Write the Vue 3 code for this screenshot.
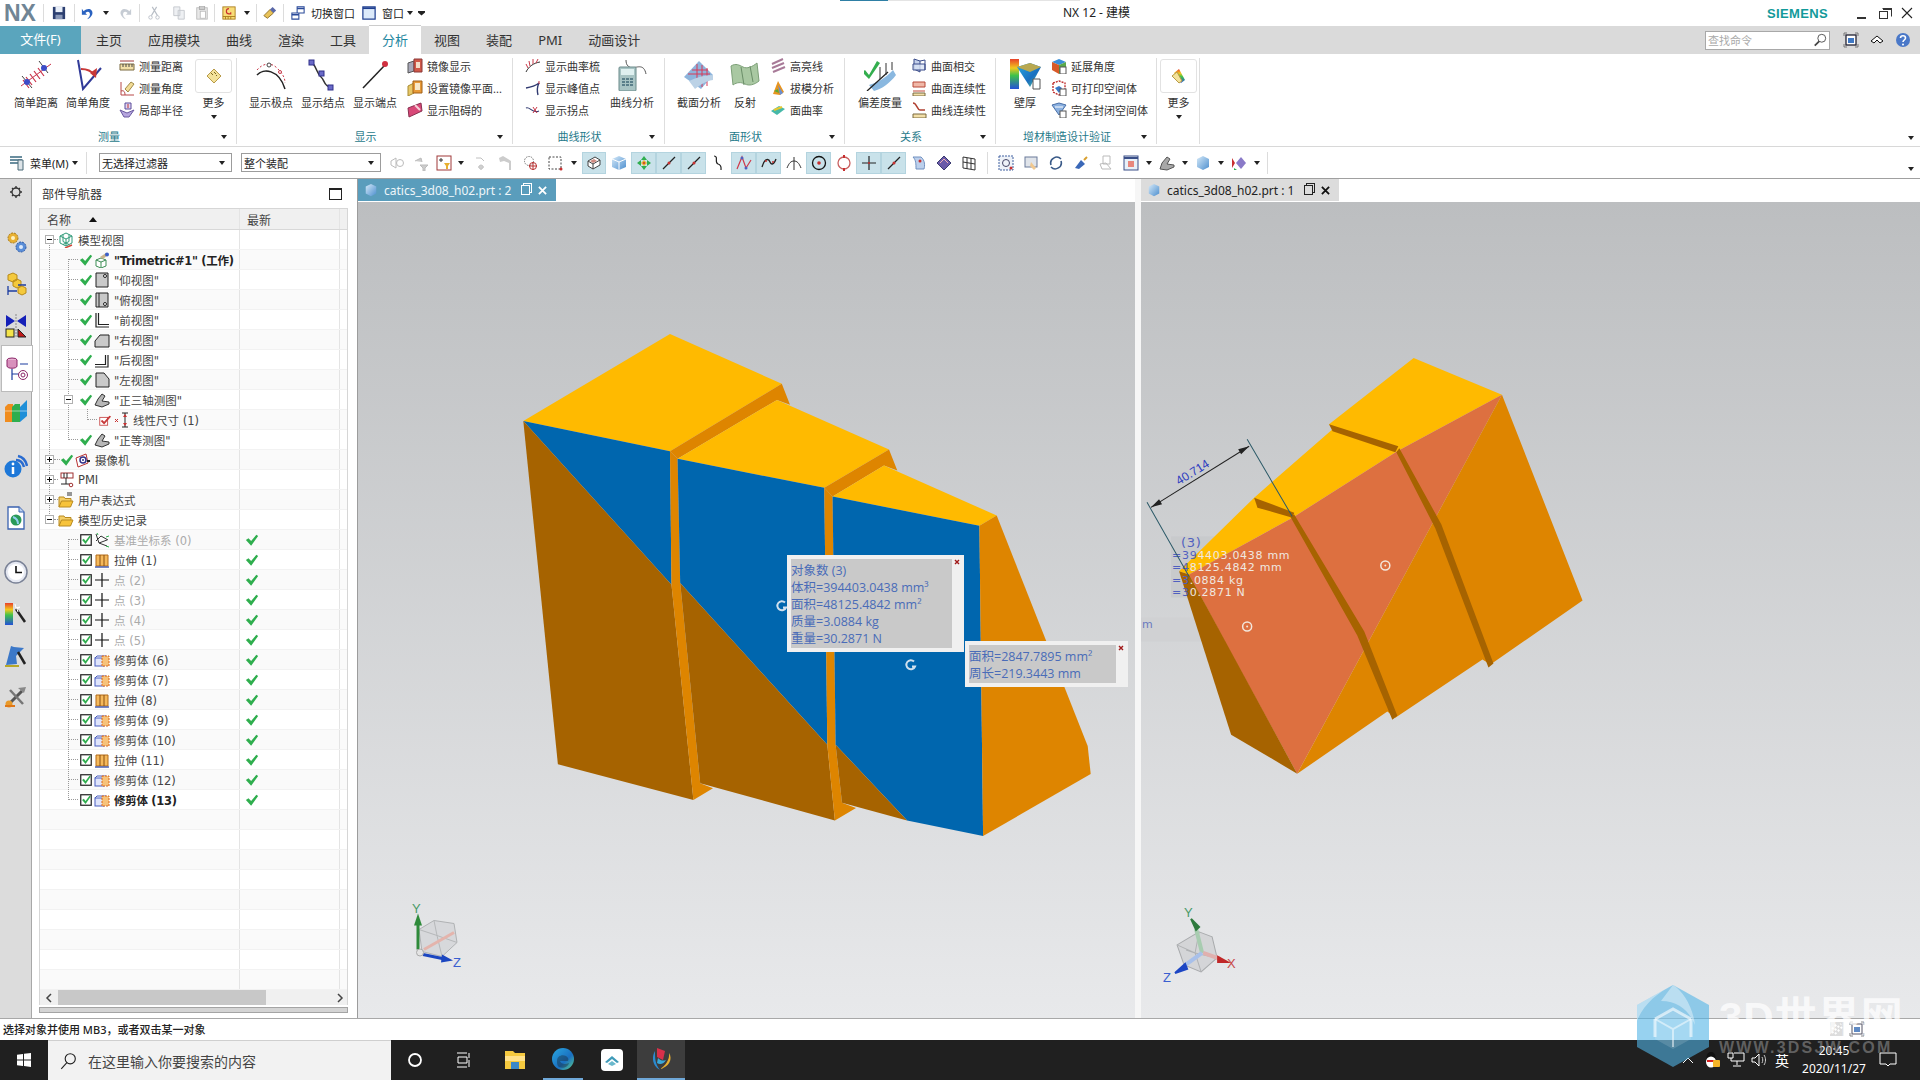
<template>
  <div class="app">
    <svg class="defs" aria-hidden="true">
      <defs>
        <linearGradient id="rainbow" x1="0" y1="0" x2="0" y2="1">
          <stop offset="0" stop-color="#e8402a" /><stop offset=".3" stop-color="#f2c81e" /><stop offset=".55" stop-color="#3ec24a" /><stop offset="1" stop-color="#2450d8" />
        </linearGradient>
        <linearGradient id="cubeblue" x1="0" y1="0" x2="1" y2="1">
          <stop offset="0" stop-color="#d5e9f8" /><stop offset="1" stop-color="#4d8fcf" />
        </linearGradient>
        <linearGradient id="gold" x1="0" y1="0" x2="0" y2="1">
          <stop offset="0" stop-color="#ffe07a" /><stop offset="1" stop-color="#e89a18" />
        </linearGradient>
        <linearGradient id="edge" x1="0" y1="0" x2="1" y2="1">
          <stop offset="0" stop-color="#2aa8e0" /><stop offset=".6" stop-color="#1a6fc0" /><stop offset="1" stop-color="#5ed08a" />
        </linearGradient>

        <symbol id="check" viewBox="0 0 16 16"><path d="M1 8l3-2 3 3 6-7 2 1.500-8 11z" fill="#2fae4e" /></symbol>
        <symbol id="checkred" viewBox="0 0 16 16"><rect x="2" y="5" width="9" height="9" fill="#fff" stroke="#c84a4a" /><path d="M3 9l2-1 2 2 6-7 2 1-8 9z" fill="#c83838" /></symbol>
        <symbol id="tbox" viewBox="0 0 16 16"><rect x="2" y="2" width="12" height="12" fill="#fff" stroke="#222" stroke-width="1.400" /><path d="M3.500 8l2-1.500 2 2.500 4.500-6 1.500 1-6 8.500z" fill="#2fae4e" /></symbol>

        <symbol id="modelview" viewBox="0 0 16 16"><path d="M8 1l6 3v7l-6 3-6-3V4zM2 4l6 3 6-3M8 7v7M5 2.500v7l6 3M11 2.500v7l-6 3" fill="none" stroke="#2f9a78" /><path d="M7 16l7-3" stroke="#d04a3a" stroke-width="1.500" /></symbol>
        <symbol id="trimetric" viewBox="0 0 16 16"><path d="M2 8l5-2 5 2v6l-5 2-5-2zM2 8l5 2 5-2M7 10v6" fill="#fff" stroke="#3f8f56" /><path d="M6 5l6-4 2 2-5 4z" fill="#c8b38a" /><circle cx="13" cy="2.500" r="2" fill="#3c5fc8" /></symbol>
        <symbol id="vbot" viewBox="0 0 16 16"><path d="M2 1h12v14H2z" fill="#c9c9c9" stroke="#222" /><circle cx="11" cy="4" r="1.500" fill="#fff" stroke="#222" /></symbol>
        <symbol id="vtop" viewBox="0 0 16 16"><path d="M2 1h12v14H2z" fill="#c9c9c9" stroke="#222" /><path d="M5 1v14" stroke="#222" /><circle cx="11" cy="12" r="1.500" fill="#fff" stroke="#222" /></symbol>
        <symbol id="vfront" viewBox="0 0 16 16"><path d="M2 1v14h13M4.500 1v11.500H15" fill="none" stroke="#222" stroke-width="1.200" /></symbol>
        <symbol id="vright" viewBox="0 0 16 16"><path d="M1 15V9l5-6h9v12z" fill="#c9c9c9" stroke="#222" /></symbol>
        <symbol id="vback" viewBox="0 0 16 16"><path d="M1 15h13V3M1 12.500h10.500V3" fill="none" stroke="#222" stroke-width="1.200" /></symbol>
        <symbol id="vleft" viewBox="0 0 16 16"><path d="M2 1h8l5 6v8H2z" fill="#c9c9c9" stroke="#222" /></symbol>
        <symbol id="iso" viewBox="0 0 16 16"><path d="M1 13l3-6 4-5 3 2-3 5 7 1v2l-7 3z" fill="#b6b6b6" stroke="#333" /></symbol>
        <symbol id="dim" viewBox="0 0 16 16"><path d="M9 1h6M12 1v14M9 15h6" stroke="#222" fill="none" /><path d="M12 2l-2 3h4zM12 14l-2-3h4z" fill="#c83030" /><path d="M2 7l3 3m0-3l-3 3" stroke="#c83030" /></symbol>
        <symbol id="camera" viewBox="0 0 16 16"><path d="M1 6l10-4 2 9-10 4z" fill="#fff" stroke="#b83030" /><circle cx="8" cy="8" r="3" fill="none" stroke="#32328a" stroke-width="1.500" /><circle cx="8" cy="8" r="1" fill="#32328a" /><path d="M12 9h3" stroke="#222" stroke-width="2" /></symbol>
        <symbol id="pmi" viewBox="0 0 16 16"><rect x="3" y="1" width="12" height="5" fill="#fff" stroke="#a03030" /><path d="M6 1v5M9 1v5M8 6v6H3M8 12h4" fill="none" stroke="#222" /><circle cx="13" cy="13" r="1.800" fill="#fff" stroke="#a03030" /></symbol>
        <symbol id="folder" viewBox="0 0 16 16"><path d="M1 14V4h5l1 1.500h6V8" fill="#f6d068" stroke="#b88a20" /><path d="M1 14l2.500-6H15l-2.500 6z" fill="#f7c33a" stroke="#b88a20" /></symbol>
        <symbol id="folderf" viewBox="0 0 16 16"><path d="M1 15V5h5l1 1.500h6V9" fill="#f6d068" stroke="#b88a20" /><path d="M1 15l2.500-6H15l-2.500 6z" fill="#f7c33a" stroke="#b88a20" /><path d="M9 1h5M9 3h5" stroke="#333" /></symbol>
        <symbol id="csys" viewBox="0 0 16 16"><path d="M2 2l3 9 8-3M5 11l8 3M2 9l5-5 7 4" fill="none" stroke="#333" /><path d="M12 5l3-1M3 1l1 2M12 14l3 1" stroke="#2fae4e" /></symbol>
        <symbol id="extrude" viewBox="0 0 16 16"><path d="M2 3h12v11H2z" fill="#f5b95c" stroke="#b26a18" /><path d="M6 3v11M10 3v11" stroke="#8a4e10" /><path d="M1 15h14" stroke="#4a5fb0" stroke-width="1.500" /></symbol>
        <symbol id="point" viewBox="0 0 16 16"><path d="M8 1v14M1 8h14" stroke="#111" stroke-width="1.200" /></symbol>
        <symbol id="trimb" viewBox="0 0 16 16"><rect x="1" y="6" width="9" height="8" fill="#dfe4fb" stroke="#4a5fc0" /><path d="M1 6l2-2h9l-2 2M10 6v8" fill="none" stroke="#4a5fc0" /><rect x="8" y="4" width="7" height="10" fill="#f7c27a" stroke="#d8681c" stroke-dasharray="2 1" /></symbol>

        <symbol id="r-gear" viewBox="0 0 24 24"><circle cx="12" cy="12" r="6" fill="none" stroke="#333" stroke-width="2" /><path d="M12 3v3M12 18v3M3 12h3M18 12h3M6 6l2 2M16 16l2 2M6 18l2-2M16 8l2-2" stroke="#333" stroke-width="2" /></symbol>
        <symbol id="r-gears" viewBox="0 0 24 24"><circle cx="9" cy="8" r="5" fill="#e8b032" stroke="#a87a18" stroke-dasharray="2 1" /><circle cx="9" cy="8" r="2" fill="#fff2c0" /><circle cx="17" cy="17" r="5" fill="#5a8ed8" stroke="#2c5aa8" stroke-dasharray="2 1" /><circle cx="17" cy="17" r="2" fill="#dbe9fb" /></symbol>
        <symbol id="r-parts" viewBox="0 0 24 24"><path d="M4 3l5-2 4 2v5l-4 2-5-2zM9 9l4-2 4 2v5l-4 2-4-2z" fill="#f4c93c" stroke="#b88a18" /><path d="M4 14v9M4 19h9M14 13h8" stroke="#1c3ca0" stroke-width="1.300" fill="none" /><path d="M14 16l4-2 4 2v5l-4 2-4-2z" fill="#f4c93c" stroke="#b88a18" /></symbol>
        <symbol id="r-con" viewBox="0 0 24 24"><path d="M2 1l9 6-9 6zM22 1l-9 6 9 6z" fill="#1520b8" /><path d="M12 0v24" stroke="#888" stroke-dasharray="2 1" /><rect x="2" y="15" width="8" height="8" fill="#f4e44a" stroke="#222" /><path d="M14 23v-8l8 8z" fill="#c01818" stroke="#222" /></symbol>
        <symbol id="r-nav" viewBox="0 0 24 24"><ellipse cx="7" cy="3" rx="5" ry="2" fill="#e7b4d2" stroke="#8a2468" /><path d="M2 3v6c0 3 10 3 10 0V3" fill="#d890bc" stroke="#8a2468" /><path d="M15 7h8M7 12v11M7 17h8" stroke="#1c3ca0" stroke-width="1.200" fill="none" /><circle cx="18" cy="18" r="4.500" fill="#fff" stroke="#8a2468" /><circle cx="18" cy="18" r="2" fill="none" stroke="#8a2468" /></symbol>
        <symbol id="r-books" viewBox="0 0 24 24"><path d="M1 8l3-3h5v18H1z" fill="#f08c1e" /><path d="M8 8l3-3h5v18H8z" fill="#2fae4e" /><path d="M16 8l7-7v16l-7 6z" fill="#1f8fd8" /><path d="M1 12h22" stroke="#fff" stroke-opacity=".5" /></symbol>
        <symbol id="r-info" viewBox="0 0 24 24"><path d="M14 2c5 1 8 5 9 10M12 6c4 0 7 3 8 7" fill="none" stroke="#2a6cd0" stroke-width="2.500" /><circle cx="9" cy="15" r="8.500" fill="#1e78d8" /><path d="M9 13v7" stroke="#fff" stroke-width="2.500" /><circle cx="9" cy="10" r="1.400" fill="#fff" /></symbol>
        <symbol id="r-doc" viewBox="0 0 24 24"><path d="M4 1h11l5 5v17H4z" fill="#fff" stroke="#3a62b0" stroke-width="1.300" /><path d="M15 1v5h5" fill="#bcd2f2" stroke="#3a62b0" /><circle cx="12" cy="14" r="5.500" fill="#2a9a58" /><path d="M9 11c3 1 5 3 5 7" stroke="#8fd0ee" stroke-width="2" fill="none" /></symbol>
        <symbol id="r-clock" viewBox="0 0 24 24"><circle cx="12" cy="12" r="11" fill="#e6e9f2" stroke="#7a8296" stroke-width="1.500" /><circle cx="12" cy="12" r="8" fill="#fff" /><path d="M12 6v6.500h6" stroke="#111" stroke-width="1.600" fill="none" /></symbol>
        <symbol id="r-map" viewBox="0 0 24 24"><rect x="1" y="1" width="8" height="22" fill="url(#rainbow)" /><path d="M12 7l9 13" stroke="#222" stroke-width="2.500" /><path d="M11 2l1 4 4-1-3 2 1 3" fill="#fff" stroke="#fff" /></symbol>
        <symbol id="r-wiz" viewBox="0 0 24 24"><path d="M2 21l5-19 3 1 10 1-8 8 1 8z" fill="#3c78c8" /><path d="M14 8l7 12" stroke="#222" stroke-width="2.500" /><path d="M1 22h14" stroke="#b8a828" stroke-width="2" /></symbol>
        <symbol id="r-tool" viewBox="0 0 24 24"><path d="M4 20L18 6" stroke="#555" stroke-width="3" /><path d="M14 3l8-1-2 6z" fill="#888" /><path d="M6 5l13 14" stroke="#777" stroke-width="2.500" /><circle cx="5" cy="19" r="3.500" fill="#e89a2a" /><path d="M1 21h10" stroke="#e07818" stroke-width="2" /></symbol>

        <symbol id="b-dist" viewBox="0 0 32 32"><path d="M1 27l30-22" stroke="#c83048" /><path d="M6 18l6 8M10 15l6 8M14 12l6 8M18 9l6 8M3 21l6 8" stroke="#c83048" stroke-width="1.200" /><path d="M2 17l10 12M19 2l9 12" stroke="#444" /><circle cx="7" cy="23" r="3" fill="#3c4cc8" /><circle cx="24" cy="9" r="3" fill="#3c4cc8" /></symbol>
        <symbol id="b-ang" viewBox="0 0 32 32"><path d="M6 1l5 29L29 9" fill="none" stroke="#303a98" stroke-width="2" /><path d="M9 10c5 0 10 1 13 6" fill="none" stroke="#c83838" stroke-width="2" /><path d="M25 9l-1 10-6-5z" fill="#c83838" /></symbol>
        <symbol id="b-pole" viewBox="0 0 32 32"><path d="M2 16c6-7 22-6 28 14" fill="none" stroke="#222" stroke-width="1.500" /><path d="M2 11c6-7 14-8 20-2s8 10 8 15" fill="none" stroke="#c83848" stroke-dasharray="2 2" /><circle cx="14" cy="6" r="2" fill="#fff" stroke="#444" /><circle cx="25" cy="13" r="1.500" fill="#fff" stroke="#c83848" /></symbol>
        <symbol id="b-knot" viewBox="0 0 32 32"><path d="M5 3c6 8 5 12 9 15s2 9 11 11" fill="none" stroke="#333" stroke-width="1.500" /><rect x="2" y="1" width="5" height="5" fill="#6a6ac8" stroke="#30308a" /><rect x="12" y="12" width="5" height="5" fill="#6a6ac8" stroke="#30308a" /><rect x="21" y="26" width="5" height="5" fill="#6a6ac8" stroke="#30308a" /></symbol>
        <symbol id="b-end" viewBox="0 0 32 32"><path d="M4 29L26 6" stroke="#222" stroke-width="1.500" /><circle cx="26" cy="5" r="3" fill="#d03040" /></symbol>
        <symbol id="b-ana" viewBox="0 0 32 32"><path d="M10 1c0 6 3 7 6 8M16 9c6-1 12-4 14 6" fill="none" stroke="#555" /><rect x="3" y="8" width="17" height="24" rx="1" fill="#a8c4c4" stroke="#6a8a8a" /><rect x="5" y="10" width="13" height="6" fill="#dff0f0" /><path d="M6 20h11M6 23h11M6 26h11" stroke="#5a7f8a" stroke-width="2" stroke-dasharray="3 1" /></symbol>
        <symbol id="b-sec" viewBox="0 0 32 32"><path d="M1 18L16 2l14 14-12 14z" fill="#8db4dc" /><path d="M5 15h22M9 11h16M14 5v22M19 6v22M24 9v18" stroke="#d83a58" /><path d="M6 22c8-4 16-6 24-6v5c-8 1-14 6-18 9z" fill="#bcd2e6" /></symbol>
        <symbol id="b-ref" viewBox="0 0 32 32"><path d="M2 7c5-3 8-1 12 1s9 0 14-4l2 18c-5 4-10 5-14 3s-8-2-12 1z" fill="#a9c8a2" stroke="#7da078" /><path d="M12 8l3 18M21 7l3 16" stroke="#6a8e68" /></symbol>
        <symbol id="b-dev" viewBox="0 0 32 32"><path d="M1 11l4 5L13 2l3 2-11 16-7-7z" fill="#33ae4e" /><path d="M5 26c8-2 18-8 24-15l3 5c-6 8-14 14-22 16z" fill="#8ab8e0" /><path d="M3 32L24 13" stroke="#222" stroke-width="1.300" /><path d="M16 20V8M22 16V4M28 11V3" stroke="#333" /></symbol>
        <symbol id="b-wall" viewBox="0 0 32 32"><rect x="1" y="0" width="9" height="30" fill="url(#rainbow)" /><path d="M8 8l13-4 11 4-11 20z" fill="url(#edge)" /><path d="M8 8l13-4 11 4-11 5z" fill="#b8a850" /><path d="M24 20h7v10h-7z" fill="#fff" stroke="#555" /></symbol>
        <symbol id="ruler" viewBox="0 0 16 16"><path d="M1 8l7-7 7 7-7 7z" fill="#f3e29a" stroke="#b89a48" /><path d="M5 5l2 2M8 4l2 2M11 7l-1 1" stroke="#7a6520" /></symbol>
        <symbol id="rulerc" viewBox="0 0 16 16"><path d="M3 5l5-4 6 11-4 3z" fill="url(#rainbow)" /><path d="M1 8l5-4 5 9-3 2z" fill="#f3e29a" stroke="#b89a48" /></symbol>

        <symbol id="s-mdist" viewBox="0 0 16 16"><path d="M1 6h14v6H1z" fill="#f2dfa8" stroke="#7a6a40" /><path d="M4 6v3M7 6v3M10 6v3M13 6v3" stroke="#444" /><path d="M1 3h14" stroke="#a03838" /></symbol>
        <symbol id="s-mang" viewBox="0 0 16 16"><path d="M2 2v13h13" fill="none" stroke="#b84848" /><path d="M2 11c3-1 4 1 4 4" fill="none" stroke="#b84848" /><path d="M6 9l6-7 3 2-6 8z" fill="#f2dc96" stroke="#a08a48" /></symbol>
        <symbol id="s-rad" viewBox="0 0 16 16"><path d="M1 8l7 3 7-3-5 7H5z" fill="#b6a6de" stroke="#6a5aa0" /><path d="M6 1h6v6H6z" fill="#e0d8f4" stroke="#5a4a9a" /><path d="M9 2v4" stroke="#c03030" /></symbol>
        <symbol id="s-mir" viewBox="0 0 16 16"><path d="M1 5l6-2v10l-6 2z" fill="#a8a8b8" stroke="#555" /><path d="M7 1h8v13H7z" fill="#d05848" stroke="#8a3838" /><rect x="9" y="4" width="4" height="6" fill="#f4dcc8" /></symbol>
        <symbol id="s-mpl" viewBox="0 0 16 16"><path d="M1 6l6-3v10l-6 3z" fill="#e8c868" stroke="#a88a30" /><path d="M6 1h9v12H6z" fill="#e89a38" stroke="#a06018" /><rect x="8" y="3" width="5" height="7" fill="#f7e8c8" /></symbol>
        <symbol id="s-blk" viewBox="0 0 16 16"><path d="M1 6l13-5 1 8-13 6z" fill="#d84878" stroke="#883050" /><path d="M8 3l5 5" stroke="#f7d0d8" stroke-width="2" /></symbol>
        <symbol id="s-comb" viewBox="0 0 16 16"><path d="M1 14c3-6 8-9 14-10" fill="none" stroke="#333" /><path d="M3 10L1 6M5 8L4 3M8 6L8 1M11 5l2-4" stroke="#c83848" /></symbol>
        <symbol id="s-peak" viewBox="0 0 16 16"><path d="M1 8c6-1 9-2 13-5-2 4-2 8-1 12" fill="none" stroke="#303a70" stroke-width="1.400" /><path d="M14 1v3" stroke="#c83848" /></symbol>
        <symbol id="s-inf" viewBox="0 0 16 16"><path d="M1 6c4-2 6 6 13 3" fill="none" stroke="#303a70" stroke-width="1.200" /><path d="M8 5l4 6m0-6l-4 6" stroke="#c83848" /></symbol>
        <symbol id="s-hl" viewBox="0 0 16 16"><path d="M2 6l11-5M2 10l12-5M3 14l12-5" stroke="#a87a98" stroke-width="2" /></symbol>
        <symbol id="s-dft" viewBox="0 0 16 16"><path d="M3 14L8 1l6 11-4 3z" fill="#e8941e" /><path d="M8 5l5 8-3 2z" fill="#6a8ed0" /><path d="M4 11l4-2 1 4z" fill="#5aa83a" /></symbol>
        <symbol id="s-fc" viewBox="0 0 16 16"><path d="M1 9l8-5 6 3-8 6z" fill="#46b8a8" /><path d="M4 8l8-3" stroke="#e8c830" stroke-width="2" /></symbol>
        <symbol id="s-int" viewBox="0 0 16 16"><path d="M3 1l6 2v11l-6-3z" fill="#c4d0ea" stroke="#3a4c8a" /><path d="M2 6h12v6H2z" fill="#d8e2f4" fill-opacity=".8" stroke="#3a4c8a" /><path d="M9 3l5-1v10" fill="none" stroke="#3a4c8a" /></symbol>
        <symbol id="s-sc" viewBox="0 0 16 16"><path d="M2 2h12v5H2z" fill="#f0b8a8" stroke="#b84838" /><path d="M2 11h12" stroke="#c04838" /><path d="M2 13h12v3H2z" fill="#f2dfa8" stroke="#7a6a40" /></symbol>
        <symbol id="s-cc" viewBox="0 0 16 16"><path d="M2 1c4 0 4 7 7 7h5" fill="none" stroke="#b04030" stroke-width="1.500" /><path d="M2 12h13v4H2z" fill="#f2dfa8" stroke="#7a6a40" /></symbol>
        <symbol id="s-ext" viewBox="0 0 16 16"><path d="M1 4l7-3 7 3-7 3z" fill="#3a8ed8" /><path d="M1 4v8l7 4V7z" fill="#d85a28" /><path d="M15 4v8l-7 4V7z" fill="#5aa84a" /><rect x="9" y="9" width="6" height="7" fill="#fff" stroke="#555" /></symbol>
        <symbol id="s-pr" viewBox="0 0 16 16"><path d="M2 3l6-2 6 2v9l-6 3-6-3z" fill="none" stroke="#c03030" stroke-dasharray="2 1" stroke-width="1.400" /><path d="M4 8l4-2 3 2-3 5z" fill="#3a78c8" /><rect x="9" y="9" width="6" height="7" fill="#fff" stroke="#555" /></symbol>
        <symbol id="s-cl" viewBox="0 0 16 16"><path d="M1 3l7-2 7 2-7 10z" fill="#8ab0e0" stroke="#4a70a8" /><path d="M4 5h8" stroke="#fff" /><rect x="9" y="9" width="6" height="7" fill="#fff" stroke="#555" /></symbol>

        <symbol id="q-save" viewBox="0 0 16 16"><path d="M1 1h14v14H1z" fill="#2c3f70" /><rect x="4" y="1" width="8" height="6" fill="#e8eef8" /><rect x="4" y="10" width="8" height="5" fill="#8a98b8" /></symbol>
        <symbol id="q-undo" viewBox="0 0 16 16"><path d="M3 6c5-5 11-2 10 3-1 3-3 5-6 6 2-2 4-4 3-7-1-2-3-2-5 0l2 2H1V3z" fill="#2a62c0" /></symbol>
        <symbol id="q-redo" viewBox="0 0 16 16"><path d="M13 6C8 1 2 4 3 9c1 3 3 5 6 6-2-2-4-4-3-7 1-2 3-2 5 0L9 10h6V3z" fill="#c6ccd4" /></symbol>
        <symbol id="q-cut" viewBox="0 0 16 16"><path d="M11 1L5 11M6 1l6 10" stroke="#b8bec6" stroke-width="1.300" /><circle cx="4" cy="13" r="2" fill="none" stroke="#b8bec6" /><circle cx="12" cy="13" r="2" fill="none" stroke="#b8bec6" /></symbol>
        <symbol id="q-copy" viewBox="0 0 16 16"><path d="M2 1h7v10H2zM7 5h7v10H7z" fill="#eef0f3" stroke="#c2c6cc" /></symbol>
        <symbol id="q-paste" viewBox="0 0 16 16"><rect x="2" y="2" width="12" height="13" fill="#e8e8e8" stroke="#bbb" /><rect x="5" y="0" width="6" height="4" fill="#ccc" stroke="#aaa" /><rect x="6" y="6" width="6" height="8" fill="#fff" stroke="#bbb" /></symbol>
        <symbol id="q-cfg" viewBox="0 0 16 16"><rect x="1" y="1" width="14" height="14" fill="#f8dc78" stroke="#a87a18" /><path d="M1 12h14M4 12v3M7 12v3M10 12v3" stroke="#a87a18" /><path d="M8 3a3 3 0 1 0 0 6h2V7" fill="none" stroke="#c83030" stroke-width="1.300" /></symbol>
        <symbol id="q-er" viewBox="0 0 16 16"><path d="M1 11l7-7 4 4-7 6z" fill="#e8c258" stroke="#8a6a20" /><path d="M8 4l3-3 4 4-3 3z" fill="#5a68a8" /></symbol>
        <symbol id="q-sw" viewBox="0 0 16 16"><path d="M7 1h8v7H7zM1 8h8v7H1z" fill="#fff" stroke="#2a4a9a" stroke-width="1.200" /><path d="M7 3h8M1 10h8" stroke="#2a4a9a" stroke-width="1.500" /></symbol>
        <symbol id="q-win" viewBox="0 0 16 16"><rect x="1" y="1" width="14" height="14" fill="#dceafa" stroke="#1f3f90" stroke-width="1.400" /><path d="M1 2.500h14" stroke="#1f3f90" stroke-width="2" /></symbol>

        <symbol id="t-menu" viewBox="0 0 16 16"><path d="M1 2h12M1 5h12M1 8h12" stroke="#3a6a80" stroke-width="1.500" /><path d="M9 5h5v10H9z" fill="#dde4e8" stroke="#4a6a78" /></symbol>
        <symbol id="t-a" viewBox="0 0 16 16"><path d="M2 6l5-3v10l-5-3z" fill="none" stroke="#bbb" /><circle cx="11" cy="8" r="3.500" fill="none" stroke="#bbb" /></symbol>
        <symbol id="t-b" viewBox="0 0 16 16"><path d="M1 6l6-3 1 4M6 10h8l-3 3v3h-2v-3z" fill="#ccc" stroke="#bbb" /></symbol>
        <symbol id="t-c" viewBox="0 0 16 16"><rect x="1" y="1" width="14" height="14" fill="#fff" stroke="#a03838" /><path d="M5 3v4M3 5h4" stroke="#333" /><path d="M8 8h6l-2 3v3h-2v-3z" fill="#e8b030" /></symbol>
        <symbol id="t-d" viewBox="0 0 16 16"><path d="M3 3h5l3 3M8 10v5M5 12h6" stroke="#c0c0c0" fill="none" /><circle cx="8" cy="12" r="2" fill="none" stroke="#c0c0c0" /></symbol>
        <symbol id="t-e" viewBox="0 0 16 16"><path d="M2 3l4-2 5 3 3 2v9h-2V8L7 6 3 7z" fill="#ccc" /></symbol>
        <symbol id="t-f" viewBox="0 0 16 16"><circle cx="6" cy="6" r="4.500" fill="none" stroke="#777" stroke-dasharray="1.500 1" /><circle cx="10" cy="11" r="3.500" fill="none" stroke="#b83030" /><path d="M10 7v8M6 11h8" stroke="#b83030" /></symbol>
        <symbol id="t-g" viewBox="0 0 16 16"><rect x="2" y="2" width="12" height="12" fill="none" stroke="#444" stroke-dasharray="2 1.500" /><circle cx="14" cy="14" r="1.500" fill="#c83030" /></symbol>
        <symbol id="t-h" viewBox="0 0 16 16"><path d="M2 6l7-4 5 3v5l-7 4-5-3z" fill="#fff" stroke="#444" /><path d="M2 6l5 3 7-4M7 9v5" stroke="#444" fill="none" /><path d="M4 6l4-2 3 2-4 2z" fill="#d08a80" /></symbol>
        <symbol id="t-i" viewBox="0 0 16 16"><path d="M1 4l7-3 7 3v8l-7 3-7-3z" fill="url(#cubeblue)" /><path d="M1 4l7 3 7-3M8 7v8" stroke="#fff" fill="none" /></symbol>
        <symbol id="t-j" viewBox="0 0 16 16"><path d="M8 1l3 4H5zM8 15l-3-4h6zM1 8l4-3v6zM15 8l-4 3V5z" fill="#2fae4e" /><path d="M8 5l3 3-3 3-3-3z" fill="#e8b030" /><circle cx="8" cy="8" r="1" fill="#c83030" /></symbol>
        <symbol id="t-l" viewBox="0 0 16 16"><path d="M2 14L14 2" stroke="#222" stroke-width="1.200" /><circle cx="8" cy="8" r="1.500" fill="#c83030" /></symbol>
        <symbol id="t-m" viewBox="0 0 16 16"><path d="M3 1c5 0 0 7 4 8s3 4 3 6" fill="none" stroke="#222" stroke-width="1.200" /></symbol>
        <symbol id="t-n" viewBox="0 0 16 16"><path d="M1 14L6 2l4 11 5-8" fill="none" stroke="#d03848" stroke-width="1.200" /><circle cx="6" cy="3" r="1.500" fill="#5060c0" /><circle cx="10" cy="13" r="1.500" fill="#5060c0" /></symbol>
        <symbol id="t-o" viewBox="0 0 16 16"><path d="M1 12C4 2 8 4 9 7s4 3 6-3" fill="none" stroke="#222" stroke-width="1.300" /><circle cx="5" cy="6" r="1" fill="#c83030" /><circle cx="12" cy="7" r="1" fill="#c83030" /></symbol>
        <symbol id="t-p" viewBox="0 0 16 16"><path d="M8 2v13M1 13c2-5 4-7 7-7s5 2 7 7" fill="none" stroke="#333" /></symbol>
        <symbol id="t-q" viewBox="0 0 16 16"><circle cx="8" cy="8" r="6.500" fill="none" stroke="#111" stroke-width="1.300" /><circle cx="8" cy="8" r="1.800" fill="#c83030" /></symbol>
        <symbol id="t-r" viewBox="0 0 16 16"><circle cx="8" cy="8" r="6" fill="none" stroke="#c86060" stroke-width="1.300" /><rect x="7" y="0" width="2" height="3" fill="#c83030" /><rect x="7" y="13" width="2" height="3" fill="#c83030" /></symbol>
        <symbol id="t-s" viewBox="0 0 16 16"><path d="M8 1v14M1 8h14" stroke="#222" stroke-width="1.200" /><circle cx="8" cy="8" r="1" fill="#c83030" /></symbol>
        <symbol id="t-u" viewBox="0 0 16 16"><path d="M2 2h8c4 3 4 9 3 12H5C5 9 5 5 2 2z" fill="#bcd0ec" stroke="#7090c0" /><circle cx="9" cy="6" r="1.500" fill="#c83030" /></symbol>
        <symbol id="t-v" viewBox="0 0 16 16"><path d="M8 1l7 7-7 7-7-7z" fill="#6a5aa8" stroke="#3a3a70" /><path d="M4 8l4-4 4 4" fill="none" stroke="#f0b0b8" /></symbol>
        <symbol id="t-w" viewBox="0 0 16 16"><path d="M2 2l12 2v11L2 13zM6 3v11M10 3v11M2 7l12 2" fill="#fff" stroke="#333" /></symbol>
        <symbol id="t-x" viewBox="0 0 16 16"><rect x="1" y="1" width="14" height="14" fill="#eef2f8" stroke="#4060a0" stroke-dasharray="2 1" /><circle cx="8" cy="8" r="3.500" fill="none" stroke="#446" /><circle cx="13" cy="13" r="1.500" fill="#c83030" /></symbol>
        <symbol id="t-y" viewBox="0 0 16 16"><rect x="2" y="2" width="12" height="10" fill="#e0e4ea" stroke="#6a7a9a" /><path d="M8 7l5 6-2 2-4-4z" fill="#f0c890" /></symbol>
        <symbol id="t-z" viewBox="0 0 16 16"><path d="M13 4A6 6 0 0 0 3 10M3 12a6 6 0 0 0 10-6" fill="none" stroke="#3a5a88" stroke-width="1.600" /></symbol>
        <symbol id="t-aa" viewBox="0 0 16 16"><path d="M2 13l6-8 4 4-6 5z" fill="#3a68b8" /><path d="M11 5l3-3" stroke="#d8a030" stroke-width="2" /></symbol>
        <symbol id="t-ab" viewBox="0 0 16 16"><path d="M5 1h7v8H5zM2 9l6-1 5 6H4z" fill="#fff" stroke="#bbb" /></symbol>
        <symbol id="t-ac" viewBox="0 0 16 16"><rect x="1" y="1" width="14" height="14" fill="#e8f0f8" stroke="#3a4f88" /><path d="M1 3h14" stroke="#3a4f88" stroke-width="2" /><rect x="5" y="6" width="6" height="6" fill="#e85a48" fill-opacity=".7" /></symbol>
        <symbol id="t-ad" viewBox="0 0 16 16"><path d="M1 14l2-6 5-6 3 2-3 5 7 1v2l-7 3z" fill="#a8a8a8" stroke="#555" /></symbol>
        <symbol id="t-ae" viewBox="0 0 16 16"><path d="M2 4l6-3 6 3v8l-6 3-6-3z" fill="url(#cubeblue)" /></symbol>
        <symbol id="t-af" viewBox="0 0 16 16"><path d="M5 8l5-6 5 6-5 6z" fill="#8a7ac8" /><path d="M1 3l3 5-3 5z" fill="#c83030" /><path d="M3 13l3 2-3 0z" fill="#2fae4e" /></symbol>
      </defs>
    </svg>

    <header class="titlebar">
      <span class="nx">NX</span>
      <span class="qsep"></span>
      <div class="qa" style="width: 30px"><svg class="i14"><use href="#q-save" /></svg></div>
      <span class="qsep"></span>
      <div class="qa" style="width: 26px"><svg class="i14"><use href="#q-undo" /></svg></div>
      <i class="caret dark" style="margin: 0 2px"></i>
      <div class="qa" style="width: 28px"><svg class="i14"><use href="#q-redo" /></svg></div>
      <span class="qsep"></span>
      <div class="qa" style="width: 27px"><svg class="i14"><use href="#q-cut" /></svg></div>
      <div class="qa" style="width: 23px"><svg class="i14"><use href="#q-copy" /></svg></div>
      <div class="qa" style="width: 24px"><svg class="i14"><use href="#q-paste" /></svg></div>
      <span class="qsep"></span>
      <div class="qa" style="width: 28px"><svg class="i14"><use href="#q-cfg" /></svg></div>
      <i class="caret dark" style="margin-left: 1px"></i>
      <span class="qsep" style="margin-left: 6px"></span>
      <div class="qa" style="width: 26px"><svg class="i14"><use href="#q-er" /></svg></div>
      <span class="qsep"></span>
      <div class="qa" style="width: 27px"><svg class="i14"><use href="#q-sw" /></svg></div>
      <span class="qtext">切换窗口</span>
      <div class="qa" style="width: 26px; margin-left: 1px"><svg class="i14"><use href="#q-win" /></svg></div>
      <span class="qtext">窗口</span>
      <i class="caret dark" style="margin-left: 3px"></i>
      <span class="custom"></span>
      <div class="progress"><span></span></div>
      <span class="doc-title">NX 12 - 建模</span>
      <span class="siemens">SIEMENS</span>
      <div class="winbtns">
        <span class="w-min"></span>
        <span class="w-res"></span>
        <svg class="w-close" viewBox="0 0 12 12"><path d="M1 1l10 10M11 1L1 11" stroke="#222" stroke-width="1.100" /></svg>
      </div>
    </header>

    <nav class="tabs">
      <div class="file-tab">文件(F)</div>
      <div v-for="t in tabs" :key="t" class="tab" :class="{ on: t === '分析' }">{{ t }}</div>
      <div class="tabs-right">
        <div class="search">
          <span>查找命令</span>
          <svg class="i14" viewBox="0 0 16 16"><circle cx="10" cy="6" r="4.500" fill="#fff" stroke="#444" /><path d="M7 9.500l-5 5" stroke="#444" stroke-width="2" /></svg>
        </div>
        <svg class="i16" viewBox="0 0 16 16"><path d="M1 4V1h3M12 1h3v3M15 12v3h-3M4 15H1v-3" fill="none" stroke="#777" /><rect x="3" y="3" width="10" height="10" fill="#fff" stroke="#223" stroke-width="1.300" /><rect x="5" y="6" width="6" height="5" fill="#3f78c4" /></svg>
        <svg class="i16" viewBox="0 0 16 16"><path d="M2 9l6-5 6 5-3 2-3-3-3 3z" fill="#fff" stroke="#111" /></svg>
        <svg class="i16" viewBox="0 0 16 16"><circle cx="8" cy="8" r="7" fill="#4a78c8" /><path d="M5.500 6c0-3 5-3 5 0 0 2-2.500 2-2.500 4" fill="none" stroke="#fff" stroke-width="1.600" /><circle cx="8" cy="12.500" r="1" fill="#fff" /></svg>
      </div>
    </nav>

    <section class="ribbon">
      <div v-for="g in groups" :key="g.id" class="group" :style="{ width: g.w + 'px' }">
        <div class="rib-top" :style="{ paddingLeft: g.pad + 'px' }">
          <template v-for="it in g.items" :key="it.key">
            <div v-if="it.kind === 'lg'" class="big" :style="{ width: it.w + 'px' }">
              <svg class="i32"><use :href="'#' + it.icon" /></svg>
              <span>{{ it.text }}</span>
            </div>
            <div v-else-if="it.kind === 'col'" class="smallcol" :style="{ width: it.w + 'px', paddingLeft: it.pl + 'px' }">
              <div v-for="r in it.rows" :key="r[1]" class="smallrow">
                <svg class="i16"><use :href="'#' + r[0]" /></svg>
                <span>{{ r[1] }}</span>
              </div>
            </div>
            <div v-else class="more">
              <div class="more-box"><svg class="i16"><use :href="'#' + it.icon" /></svg></div>
              <span>更多</span>
              <i class="caret dark"></i>
            </div>
          </template>
        </div>
        <div v-if="g.name" class="rib-label">
          <span>{{ g.name }}</span>
          <i class="caret dark"></i>
        </div>
      </div>
      <i class="caret dark rib-end"></i>
    </section>

    <section class="toolbar">
      <div class="menu-btn">
        <svg class="i16"><use href="#t-menu" /></svg>
        <span>菜单(M)</span>
        <i class="caret dark"></i>
      </div>
      <span class="tb-sep"></span>
      <div class="select" style="width: 133px"><span>无选择过滤器</span><i class="caret dark"></i></div>
      <div class="select" style="width: 140px"><span>整个装配</span><i class="caret dark"></i></div>
      <div class="tb-icons">
        <template v-for="(t, idx) in tools" :key="idx">
          <span v-if="t.sep" class="tb-sep2" :style="{ width: t.w + 'px' }"></span>
          <div v-else-if="t.caret" class="tb-caret" :style="{ width: t.w + 'px' }"><i class="caret dark"></i></div>
          <div v-else class="tb-item" :class="{ act: t.on }" :style="{ width: t.w + 'px' }">
            <svg class="i16"><use :href="'#t-' + t.n" /></svg>
          </div>
        </template>
      </div>
      <i class="caret dark rib-end2"></i>
    </section>

    <main class="main">
      <aside class="rail">
        <div v-for="r in rail" :key="r.n" class="rail-item" :class="{ on: r.on }" :style="{ height: r.h + 'px', marginTop: (r.mt || 0) + 'px' }">
          <svg :class="r.small ? 'i16' : 'i24'"><use :href="'#' + r.n" /></svg>
        </div>
      </aside>

      <section class="nav">
        <div class="nav-head">
          <span>部件导航器</span>
          <i class="maxbox"></i>
        </div>
        <div class="tree">
          <div class="tree-head">
            <div class="c-name"><span>名称</span><i class="sort"></i></div>
            <div class="c-new">最新</div>
          </div>
          <div v-for="(r, i) in rows" :key="i" class="row" :class="{ alt: i % 2 === 1 }">
            <div class="c-name" :style="{ paddingLeft: r.x + 'px' }">
              <i v-for="g in r.guides" :key="g.x" class="vl" :class="{ half: g.half, topoff: g.top }" :style="{ left: g.x + 'px' }"></i>
              <i v-if="r.stub" class="hl" :style="{ left: r.stub[0] + 'px', width: r.stub[1] + 'px' }"></i>
              <i v-if="r.exp" class="expander" :class="{ plus: r.exp === '+' }" :style="{ left: r.expX + 'px' }"></i>
              <svg v-if="r.tick" class="tk"><use href="#check" /></svg>
              <svg v-if="r.redtick" class="tk"><use href="#checkred" /></svg>
              <svg v-if="r.box" class="tk"><use href="#tbox" /></svg>
              <svg v-if="r.icon" class="ti"><use :href="'#' + r.icon" /></svg>
              <span class="rt" :class="{ grey: r.grey, bold: r.bold }">{{ r.t }}</span>
            </div>
            <div class="c-new"><svg v-if="r.box" class="tk"><use href="#check" /></svg></div>
          </div>
          <div class="hscroll">
            <svg viewBox="0 0 8 10" class="arr"><path d="M6 1L2 5l4 4" fill="none" stroke="#444" stroke-width="1.500" /></svg>
            <div class="thumb"></div>
            <svg viewBox="0 0 8 10" class="arr r"><path d="M2 1l4 4-4 4" fill="none" stroke="#444" stroke-width="1.500" /></svg>
          </div>
        </div>
        <div class="nav-bar"></div>
      </section>

      <section class="pane first">
        <div class="doc-tabs">
          <div class="doc-tab active">
            <svg class="i14"><use href="#t-ae" /></svg>
            <span>catics_3d08_h02.prt : 2</span>
            <i class="restore light"></i>
            <svg class="xx" viewBox="0 0 10 10"><path d="M1 1l8 8M9 1L1 9" stroke="#fff" stroke-width="2" /></svg>
          </div>
        </div>
        <div class="viewport">
          <svg class="scene" viewBox="359 203 777 815">
            <polygon fill="#ffba00" points="524.3,421.4 671,334.5 782.8,384.2 671,451.8" />
            <polygon fill="#de8500" points="671,451.8 782.8,384.2 791,405.2 778,400.4 678.6,459.3" />
            <polygon fill="#ffba00" points="678.6,459.3 778,400.4 890,450.1 825.3,488.3" />
            <polygon fill="#de8500" points="825.3,488.3 890,450.1 898.3,471.1 885,466 833.6,497.1" />
            <polygon fill="#ffba00" points="833.6,497.1 885,466 997.7,516 980.4,526.2" />
            <polygon fill="#0066ae" points="524.3,421.4 671,451.8 672.5,585.3" />
            <polygon fill="#a66300" points="524.3,421.4 672.5,585.3 694.4,800.6 558.9,764.8" />
            <polygon fill="#de8500" points="671,451.8 678.6,459.3 681.2,583.6 701.2,783.7 714,788.8 694.4,800.6 672.5,585.3" />
            <polygon fill="#0066ae" points="678.6,459.3 825.3,488.3 828.3,745.2 681.2,583.6" />
            <polygon fill="#a66300" points="681.2,583.6 828.3,745.2 835.9,820.9 701.2,783.7" />
            <polygon fill="#de8500" points="825.3,488.3 833.6,497.1 836.6,745.2 843,803.3 857,808.4 835.9,820.9 828.3,745.2" />
            <polygon fill="#0066ae" points="833.6,497.1 980.4,526.2 984.1,836.5 908.1,820.9 836.6,745.2" />
            <polygon fill="#a66300" points="836.6,745.2 908.1,820.9 843,803.3" />
            <polygon fill="#de8500" points="980.4,526.2 997.7,516 1088.7,746.6 1091.7,774.6 984.1,836.5" />

            <g fill="none" stroke="#cfe0ee" stroke-width="2">
              <path d="M786 603a4.500 4.500 0 1 0 1 5h-3" />
              <path d="M915 662a4.500 4.500 0 1 0 1 5h-3" />
            </g>

            <g class="triad">
              <path d="M435 921l20 3 3 19-15 14-20-5-3-22z" fill="#d2d3d5" fill-opacity=".7" stroke="#b0b2b4" />
              <path d="M420 930l18 6 20 7M438 936l-3-15M438 936l5 21" fill="none" stroke="#b6b8ba" />
              <path d="M425 950l30-17" stroke="#e4b4ac" stroke-width="3" />
              <path d="M419 950V922" stroke="#2e8a3a" stroke-width="3" />
              <path d="M419 914l-4 12h8z" fill="#2e8a3a" />
              <path d="M424 955l24 5" stroke="#1b46c0" stroke-width="3" />
              <path d="M454 961l-11-6-1 8z" fill="#1b46c0" />
              <circle cx="421" cy="953" r="3.500" fill="#e4e4e4" stroke="#aaa" />
              <text x="413" y="913" class="ax" fill="#4a9a6a">Y</text>
              <text x="454" y="967" class="ax" fill="#3a5fd0">Z</text>
            </g>
          </svg>

          <div class="popup p1">
            <div class="pop-body">
              <div>对象数 (3)</div>
              <div>体积=394403.0438 mm³</div>
              <div>面积=48125.4842 mm²</div>
              <div>质量=3.0884 kg</div>
              <div>重量=30.2871 N</div>
            </div>
            <svg class="pop-x" viewBox="0 0 6 6"><path d="M1 1l4 4M5 1L1 5" stroke="#a01818" stroke-width="1.400" /></svg>
          </div>
          <div class="popup p2">
            <div class="pop-body">
              <div>面积=2847.7895 mm²</div>
              <div>周长=219.3443 mm</div>
            </div>
            <svg class="pop-x" viewBox="0 0 6 6"><path d="M1 1l4 4M5 1L1 5" stroke="#a01818" stroke-width="1.400" /></svg>
          </div>
        </div>
      </section>

      <div class="split"></div>

      <section class="pane second">
        <div class="doc-tabs">
          <div class="doc-tab">
            <svg class="i14"><use href="#t-ae" /></svg>
            <span>catics_3d08_h02.prt : 1</span>
            <i class="restore"></i>
            <svg class="xx" viewBox="0 0 10 10"><path d="M1 1l8 8M9 1L1 9" stroke="#111" stroke-width="2" /></svg>
          </div>
        </div>
        <div class="viewport">
          <svg class="scene" viewBox="1142 203 778 815">
            <rect x="1142" y="618" width="60" height="24" fill="#d0d1d3" />
            <text x="1143" y="628" class="ghost" fill="#6a7ac0">m</text>
            <rect x="1172" y="537" width="70" height="61" fill="#c8cacc" />

            <polygon fill="#ffba00" points="1180,571.7 1255,498.3 1333.3,430 1329.8,424.9 1414.3,358.8 1502.5,395.5 1398.3,451.7 1293.3,518.3 1190,575" />
            <polygon fill="#a66300" points="1255,498.3 1258.3,508.3 1293.3,518.3 1295,513.3" />
            <polygon fill="#a66300" points="1329.8,424.9 1333.3,432 1396,453 1399,447" />
            <polygon fill="#dd7040" points="1190,575 1293.3,518.3 1398.3,451.7 1502.5,395.5 1298,774 1230,650" />
            <polygon fill="#a66300" points="1180,571.7 1190,575 1298,774 1232,735" />
            <polygon fill="#de8500" points="1502.5,395.5 1583,601 1491,665 1483,660 1396,718 1388,712 1298,774" />
            <polygon fill="#a66300" points="1291,517 1295,515 1365,632 1398,716 1393,720 1358,636" />
            <polygon fill="#a66300" points="1397,453 1400,449 1442,525 1494,664 1489,668 1436,529" />

            <g fill="none" stroke="#f3e7dc" stroke-width="1.500">
              <circle cx="1386" cy="566" r="4.500" />
              <circle cx="1248" cy="627" r="4.500" />
            </g>
            <circle cx="1386" cy="566" r="1" fill="#f3e7dc" />
            <circle cx="1248" cy="627" r="1" fill="#f3e7dc" />

            <g class="ghost">
              <text x="1182" y="548" fill="#5060c0" font-size="13">(3)</text>
              <text x="1173" y="560" fill="#f0e8e0"><tspan fill="#5060c0">=39</tspan>4403.0438 mm</text>
              <text x="1173" y="572" fill="#f0e8e0"><tspan fill="#5060c0">=4</tspan>8125.4842 mm</text>
              <text x="1173" y="585" fill="#f0e8e0"><tspan fill="#5060c0">=3</tspan>.0884 kg</text>
              <text x="1173" y="597" fill="#f0e8e0"><tspan fill="#5060c0">=3</tspan>0.2871 N</text>
            </g>

            <path d="M1148 503l42 74M1248 440l45 77" stroke="#2c5a68" fill="none" />
            <path d="M1152 508L1250 447" stroke="#222" fill="none" />
            <path d="M1152 508l11-3-3-5zM1250 447l-11 3 3 5z" fill="#222" />
            <text x="0" y="0" class="dimtxt" transform="translate(1180 486) rotate(-32)">40.714</text>

            <g class="triad">
              <path d="M1200 932l13 5 5 21-16 14-17-7-7-20z" fill="#d0d1d3" fill-opacity=".8" stroke="#a8aaac" />
              <path d="M1178 945l18 8 22 5M1196 953l-9-3M1200 932l-4 21M1196 953l6 19" fill="none" stroke="#b0b2b4" />
              <path d="M1203 953l-6-24" stroke="#a8ccb0" stroke-width="4" />
              <path d="M1197 930l-5-11 8 8z" fill="#2e7a3e" stroke="#2e7a3e" stroke-width="2" />
              <path d="M1204 953l17 6" stroke="#e0b0ae" stroke-width="4" />
              <path d="M1228 962l-9-5 0 5z" fill="#c02828" stroke="#c02828" stroke-width="2" />
              <path d="M1203 953l-18 13" stroke="#a8c0ea" stroke-width="4" />
              <path d="M1176 973l10-9 2 5z" fill="#1c46c4" stroke="#1c46c4" stroke-width="2" />
              <text x="1185" y="917" class="ax" fill="#4a9a6a">Y</text>
              <text x="1228" y="968" class="ax" fill="#c84848">X</text>
              <text x="1164" y="982" class="ax" fill="#3a5fd0">Z</text>
            </g>
          </svg>
        </div>
      </section>
    </main>

    <footer class="status">
      <span>选择对象并使用 MB3，或者双击某一对象</span>
      <div class="status-icons">
        <svg class="i16" viewBox="0 0 16 16"><rect x="1" y="1" width="14" height="14" fill="#ddd" /><path d="M3 12L12 3M6 13l7-7M3 8l5-5" stroke="#fff" stroke-width="2" stroke-dasharray="2 2" /></svg>
        <svg class="i16" viewBox="0 0 16 16"><path d="M1 4V1h3M12 1h3v3M15 12v3h-3M4 15H1v-3" fill="none" stroke="#888" /><rect x="3" y="3" width="10" height="10" fill="#fff" stroke="#556" /><rect x="5" y="6" width="6" height="5" fill="#5f8ac4" /></svg>
      </div>
    </footer>

    <footer class="taskbar">
      <div class="start">
        <svg viewBox="0 0 16 16" class="i16"><path d="M1 2.800L7 2v5.500H1zM8 1.800L15 1v6.500H8zM1 8.500h6V14l-6-.8zM8 8.500h7V15l-7-.9z" fill="#fff" /></svg>
      </div>
      <div class="task-search">
        <svg viewBox="0 0 16 16" class="i18"><circle cx="10" cy="6" r="4.500" fill="none" stroke="#222" /><path d="M7 9.500L2 15" stroke="#222" /></svg>
        <span>在这里输入你要搜索的内容</span>
      </div>
      <div class="task-item" style="width: 48px"><svg viewBox="0 0 16 16" class="i16"><circle cx="8" cy="8" r="6" fill="none" stroke="#fff" stroke-width="1.800" /></svg></div>
      <div class="task-item" style="width: 48px"><svg viewBox="0 0 16 16" class="i16"><path d="M2 1h10M3 5h9v6H3zM2 15h10M14 1v5M14 8v7" fill="none" stroke="#fff" /></svg></div>
      <div class="task-item" style="width: 56px"><svg viewBox="0 0 24 24" class="i24"><path d="M2 3h8l2 2h10v16H2z" fill="#f5c93f" /><path d="M2 8h20v5H2z" fill="#ffe18a" /><rect x="8" y="14" width="8" height="7" fill="#3a88c8" /></svg></div>
      <div class="task-item ul" style="width: 40px"><svg viewBox="0 0 24 24" class="i24"><circle cx="12" cy="12" r="11" fill="url(#edge)" /><path d="M6 14c0-5 5-7 9-5 2 1 3 3 2 5H9c1 3 5 4 9 2-1 4-6 6-10 4-2-1-2-4-2-6z" fill="#1a1a1a" fill-opacity=".35" /></svg></div>
      <div class="task-item" style="width: 54px; padding-left: 4px"><svg viewBox="0 0 24 24" class="i24"><rect x="1" y="1" width="22" height="22" rx="4" fill="#fff" /><path d="M5 14l7-6 7 6-2 1-5-4-5 4z" fill="#3f9ab8" /><path d="M8 16l4-3 4 3-4 2z" fill="#6ab8cc" /></svg></div>
      <div class="task-item ul active" style="width: 48px"><svg viewBox="0 0 24 24" class="i24"><path d="M8 1l8 3-2 9-6-3z" fill="#d8304a" /><path d="M6 4c-3 5-3 12 2 17l3 2c-5-6-5-12-5-19z" fill="#2a8ad0" /><path d="M20 6c4 6 0 14-9 16 5-3 10-9 9-16z" fill="#e8b030" /><path d="M9 11c3 3 5 3 8 2-2 4-6 5-9 3z" fill="#3aa8d8" /></svg></div>
      <div class="tray">
        <svg viewBox="0 0 12 8" class="chev"><path d="M1 7l5-5 5 5" fill="none" stroke="#fff" /></svg>
        <svg viewBox="0 0 16 18" class="i18"><ellipse cx="7" cy="6" rx="4.500" ry="5" fill="#111" /><ellipse cx="7" cy="11" rx="5" ry="5.500" fill="#fff" /><path d="M3 9h8v2H3z" fill="#d82020" /><rect x="9" y="9" width="7" height="7" rx="1" fill="#f4b428" /></svg>
        <svg viewBox="0 0 18 16" class="net"><path d="M1 1h5M1 1v5h5V1M4 6v3h13V1H7M10 9v4M6 14h8" fill="none" stroke="#fff" /></svg>
        <svg viewBox="0 0 16 16" class="i16"><path d="M1 6h3l4-4v12l-4-4H1z" fill="none" stroke="#fff" /><path d="M11 5c1 2 1 4 0 6M13 3c2 3 2 7 0 10" fill="none" stroke="#ccc" /></svg>
        <span class="ime">英</span>
        <div class="clock"><span>20:45</span><span>2020/11/27</span></div>
        <svg viewBox="0 0 18 16" class="notif"><path d="M1 1h16v11h-6l-2 2-2-2H1z" fill="none" stroke="#fff" /></svg>
      </div>
    </footer>

    <div class="watermark">
      <svg viewBox="0 0 72 82" class="wm-hex">
        <path d="M36 0l36 20v42L36 82 0 62V20z" fill="#52b4e6" fill-opacity=".6" />
        <path d="M36 0C20 8 6 20 0 36V20z M36 0c10 6 20 22 22 40-6-14-16-24-34-24z" fill="#fff" fill-opacity=".4" />
        <path d="M36 24l18 10v20L36 64 18 54V34z" fill="#fff" fill-opacity=".14" />
        <path d="M18 34l18-10 18 10M18 34v18M54 34v18" fill="none" stroke="#fff" stroke-width="3" stroke-opacity=".6" />
        <path d="M18 34l18 10 18-10M36 44v18" fill="none" stroke="#fff" stroke-width="2" stroke-opacity=".5" />
      </svg>
      <div class="wm-text">
        <span class="wm-big">3D世界网</span>
        <span class="wm-small">WWW.3DSJW.COM</span>
      </div>
    </div>
  </div>
</template>

<script setup>
const tabs = ['主页', '应用模块', '曲线', '渲染', '工具', '分析', '视图', '装配', 'PMI', '动画设计']

const lg = (icon, text, w = 52) => ({ kind: 'lg', key: text, icon, text, w })
const col = (w, rows, pl = 0) => ({ kind: 'col', key: rows[0][1], w, rows, pl })

const groups = [
  {
    id: 1, name: '测量', w: 237, pad: 10,
    items: [
      lg('b-dist', '简单距离'),
      lg('b-ang', '简单角度'),
      col(81, [['s-mdist', '测量距离'], ['s-mang', '测量角度'], ['s-rad', '局部半径']], 5),
      { kind: 'more', key: 'm1', icon: 'ruler' }
    ]
  },
  {
    id: 2, name: '显示', w: 276, pad: 8,
    items: [
      lg('b-pole', '显示极点'),
      lg('b-knot', '显示结点'),
      lg('b-end', '显示端点'),
      col(110, [['s-mir', '镜像显示'], ['s-mpl', '设置镜像平面...'], ['s-blk', '显示阻碍的']], 6)
    ]
  },
  {
    id: 3, name: '曲线形状', w: 152, pad: 12,
    items: [
      col(81, [['s-comb', '显示曲率梳'], ['s-peak', '显示峰值点'], ['s-inf', '显示拐点']]),
      lg('b-ana', '曲线分析')
    ]
  },
  {
    id: 4, name: '面形状', w: 180, pad: 8,
    items: [
      lg('b-sec', '截面分析'),
      lg('b-ref', '反射', 40),
      col(78, [['s-hl', '高亮线'], ['s-dft', '拔模分析'], ['s-fc', '面曲率']], 5)
    ]
  },
  {
    id: 5, name: '关系', w: 151, pad: 9,
    items: [
      lg('b-dev', '偏差度量'),
      col(86, [['s-int', '曲面相交'], ['s-sc', '曲面连续性'], ['s-cc', '曲线连续性']], 5)
    ]
  },
  {
    id: 6, name: '增材制造设计验证', w: 161, pad: 7,
    items: [
      lg('b-wall', '壁厚', 44),
      col(105, [['s-ext', '延展角度'], ['s-pr', '可打印空间体'], ['s-cl', '完全封闭空间体']], 4)
    ]
  },
  {
    id: 7, name: '', w: 43, pad: 3,
    items: [{ kind: 'more', key: 'm2', icon: 'rulerc' }]
  }
]

// widths follow the spacing of the real toolbar
const t = (n, w = 25, on = false) => ({ n, w, on })
const car = (w = 14) => ({ caret: true, w })
const sep = (w = 12) => ({ sep: true, w })
const tools = [
  t('a'), t('b'), t('c', 20), car(), t('d'), t('e', 24), t('f', 27), t('g', 22), car(16),
  t('h', 24, true), t('i'), t('j', 25, true), t('l', 25, true), t('l', 25, true), t('m'),
  t('n', 25, true), t('o', 25, true), t('p'), t('q', 25, true), t('r'), t('s', 25, true),
  t('l', 25, true), t('u'), t('v'), t('w'), sep(),
  t('x'), t('y'), t('z'), t('aa'), t('ab'), t('ac'), car(12), t('ad', 24), car(12),
  t('ae', 24), car(12), t('af', 24), car(12), sep(8)
]

const rail = [
  { n: 'r-gear', h: 26, small: true },
  { n: 'r-gears', h: 42, mt: 16 },
  { n: 'r-parts', h: 42 },
  { n: 'r-con', h: 40, mt: 1 },
  { n: 'r-nav', h: 45, on: true },
  { n: 'r-books', h: 40 },
  { n: 'r-info', h: 50, mt: 10 },
  { n: 'r-doc', h: 50, mt: 2 },
  { n: 'r-clock', h: 50, mt: 4 },
  { n: 'r-map', h: 34 },
  { n: 'r-wiz', h: 50 },
  { n: 'r-tool', h: 32 }
]

// x positions below are relative to the tree's left edge (40px on screen)
const g0 = { x: 9 }
const g1 = { x: 28 }
const lvl0 = (text, icon, exp, extra = {}) => ({
  t: text, icon, exp, expX: 5, x: 18, guides: [g0], stub: [14, 4], ...extra
})
const view = (text, icon, extra = {}) => ({
  t: text, icon, x: 39, tick: true, guides: [g0, g1], stub: [29, 9], ...extra
})
const hist = (text, icon, extra = {}) => ({
  t: text, icon, x: 39, box: true, guides: [g1], stub: [29, 9], ...extra
})

const rows = [
  { t: '模型视图', icon: 'modelview', exp: '-', expX: 5, x: 18, guides: [{ x: 9, top: true }], stub: [14, 4] },
  view('"Trimetric#1" (工作)', 'trimetric', { bold: true, guides: [g0, { x: 28, top: true }] }),
  view('"仰视图"', 'vbot'),
  view('"俯视图"', 'vtop'),
  view('"前视图"', 'vfront'),
  view('"右视图"', 'vright'),
  view('"后视图"', 'vback'),
  view('"左视图"', 'vleft'),
  view('"正三轴测图"', 'iso', { exp: '-', expX: 24, stub: null }),
  { t: '线性尺寸 (1)', icon: 'dim', x: 58, redtick: true, guides: [g0, g1, { x: 47, half: true }], stub: [47, 10] },
  view('"正等测图"', 'iso', { guides: [g0, { x: 28, half: true }] }),
  { t: '摄像机', icon: 'camera', tick: true, exp: '+', expX: 5, x: 20, guides: [g0], stub: [14, 6] },
  lvl0('PMI', 'pmi', '+'),
  lvl0('用户表达式', 'folderf', '+'),
  lvl0('模型历史记录', 'folder', '-', { guides: [{ x: 9, half: true }] }),
  hist('基准坐标系 (0)', 'csys', { grey: true, guides: [{ x: 28, top: true }] }),
  hist('拉伸 (1)', 'extrude'),
  hist('点 (2)', 'point', { grey: true }),
  hist('点 (3)', 'point', { grey: true }),
  hist('点 (4)', 'point', { grey: true }),
  hist('点 (5)', 'point', { grey: true }),
  hist('修剪体 (6)', 'trimb'),
  hist('修剪体 (7)', 'trimb'),
  hist('拉伸 (8)', 'extrude'),
  hist('修剪体 (9)', 'trimb'),
  hist('修剪体 (10)', 'trimb'),
  hist('拉伸 (11)', 'extrude'),
  hist('修剪体 (12)', 'trimb'),
  hist('修剪体 (13)', 'trimb', { bold: true, guides: [{ x: 28, half: true }] }),
  ...Array.from({ length: 9 }, () => ({ t: '', x: 0, guides: [] }))
]
</script>

<style scoped>
.app {
  width: 1920px;
  height: 1080px;
  display: flex;
  flex-direction: column;
  position: relative;
  overflow: hidden;
  background: #fff;
  color: #333;
  font: 11px "Noto Sans", "Noto Sans CJK SC", sans-serif;
}
.defs {
  position: absolute;
  width: 0;
  height: 0;
}
.i14 { width: 14px; height: 14px; flex: none; }
.i16 { width: 16px; height: 16px; flex: none; }
.i18 { width: 18px; height: 18px; flex: none; }
.i24 { width: 24px; height: 24px; flex: none; }
.i32 { width: 32px; height: 32px; flex: none; }
.caret {
  display: inline-block;
  width: 0;
  height: 0;
  border: 3px solid transparent;
  border-top: 4px solid #333;
  border-bottom: 0;
  flex: none;
}
.caret.dark { border-top-color: #222; }

/* title bar */
.titlebar {
  height: 26px;
  display: flex;
  align-items: center;
  position: relative;
  flex: none;
}
.nx {
  width: 43px;
  padding-left: 4px;
  box-sizing: border-box;
  font: bold 23px "Liberation Sans", sans-serif;
  color: #708595;
}
.qsep { width: 1px; height: 18px; background: #dcdcdc; flex: none; }
.qa { display: flex; justify-content: center; align-items: center; height: 26px; flex: none; }
.qtext { font-size: 11px; color: #222; white-space: nowrap; }
.custom {
  width: 7px;
  height: 5px;
  margin-left: 5px;
  clip-path: polygon(0 0, 100% 0, 100% 30%, 100% 40%, 50% 100%, 0 40%);
  background: #222;
}
.progress {
  position: absolute;
  left: 840px;
  top: 0;
  width: 240px;
  height: 1px;
  background: #e4e4e4;
}
.progress span { display: block; width: 48px; height: 1px; background: #2e7fa5; }
.doc-title {
  position: absolute;
  left: 1063px;
  top: 5px;
  font-size: 12px;
  line-height: 16px;
  color: #222;
}
.siemens {
  position: absolute;
  left: 1767px;
  top: 5px;
  font: bold 13px/18px "Liberation Sans", sans-serif;
  letter-spacing: 0.35px;
  color: #129a9a;
}
.winbtns {
  margin-left: auto;
  display: flex;
  align-items: center;
  gap: 13px;
  padding-right: 7px;
}
.w-min { width: 9px; height: 2px; background: #333; margin-top: 9px; }
.w-res {
  width: 7px;
  height: 6px;
  border: 1px solid #333;
  position: relative;
  margin-top: 3px;
}
.w-res::before {
  content: "";
  position: absolute;
  left: 2px;
  top: -4px;
  width: 8px;
  height: 7px;
  border: 1px solid #333;
  border-left-color: transparent;
  border-bottom-color: transparent;
  box-shadow: inset 0 1px 0 #333;
}
.w-close { width: 12px; height: 12px; }

/* ribbon tabs */
.tabs {
  height: 28px;
  background: #dadada;
  display: flex;
  align-items: stretch;
  flex: none;
  font-size: 13px;
}
.file-tab {
  width: 81px;
  margin-right: 2px;
  background: #5aa5bd;
  color: #fff;
  text-align: center;
  line-height: 26px;
}
.tab { padding: 0 13px; line-height: 28px; color: #333; white-space: nowrap; }
.tab.on { background: #fff; color: #1f87a0; box-shadow: 0 -1px 0 #ccc; }
.tabs-right {
  margin-left: auto;
  display: flex;
  align-items: center;
  gap: 10px;
  padding-right: 9px;
}
.search {
  width: 125px;
  height: 19px;
  box-sizing: border-box;
  border: 1px solid #a8a8a8;
  background: #fff;
  display: flex;
  align-items: center;
  justify-content: space-between;
  padding: 0 2px 0 2px;
  margin-right: 3px;
  color: #aaa;
  font-size: 11px;
}

/* ribbon */
.ribbon {
  height: 93px;
  box-sizing: border-box;
  padding: 4px 0 2px;
  border-bottom: 1px solid #d8d8d8;
  display: flex;
  position: relative;
  flex: none;
}
.group {
  box-sizing: border-box;
  border-right: 1px solid #dedede;
  display: flex;
  flex-direction: column;
  flex: none;
}
.rib-top {
  display: flex;
  height: 73px;
  margin-top: -3px;
}
.big {
  display: flex;
  flex-direction: column;
  align-items: center;
  padding-top: 4px;
  flex: none;
  white-space: nowrap;
}
.big span { margin-top: 5px; line-height: 14px; color: #333; }
.smallcol { flex: none; box-sizing: border-box; }
.smallrow {
  height: 22px;
  display: flex;
  align-items: center;
  gap: 4px;
  white-space: nowrap;
  color: #333;
}
.more {
  width: 37px;
  display: flex;
  flex-direction: column;
  align-items: center;
  padding-top: 4px;
  flex: none;
}
.more-box {
  width: 37px;
  height: 34px;
  box-sizing: border-box;
  border: 1px solid #e2e2e2;
  border-radius: 3px;
  display: flex;
  align-items: center;
  justify-content: center;
}
.more span { margin-top: 3px; line-height: 14px; }
.more .caret { margin-top: 5px; }
.rib-label {
  height: 14px;
  margin-top: 4px;
  display: flex;
  align-items: center;
}
.rib-label span {
  flex: 1;
  text-align: center;
  line-height: 14px;
  color: #1f7a8a;
  white-space: nowrap;
}
.rib-label .caret { margin: 0 9px 0 3px; }
.rib-end { position: absolute; right: 6px; bottom: 6px; }

/* toolbar */
.toolbar {
  height: 32px;
  box-sizing: border-box;
  border-bottom: 1px solid #a0a0a0;
  display: flex;
  align-items: center;
  position: relative;
  flex: none;
}
.menu-btn {
  display: flex;
  align-items: center;
  width: 86px;
  padding-left: 9px;
  box-sizing: border-box;
  flex: none;
  color: #222;
}
.menu-btn span { margin: 0 3px 0 5px; white-space: nowrap; }
.tb-sep { width: 1px; height: 22px; background: #dcdcdc; margin-right: 12px; flex: none; }
.select {
  height: 19px;
  box-sizing: border-box;
  border: 1px solid #9c9c9c;
  display: flex;
  align-items: center;
  justify-content: space-between;
  padding: 0 6px 0 2px;
  margin-right: 9px;
  flex: none;
  color: #222;
}
.tb-icons {
  display: flex;
  align-items: center;
  margin-left: -6px;
}
.tb-item {
  height: 22px;
  box-sizing: border-box;
  display: flex;
  align-items: center;
  justify-content: center;
  flex: none;
}
.tb-item.act { background: #c9e2ea; box-shadow: inset 0 0 0 1px #b4d4df; }
.tb-caret { display: flex; justify-content: center; flex: none; }
.tb-sep2 { height: 22px; flex: none; position: relative; }
.tb-sep2::after {
  content: "";
  position: absolute;
  left: 50%;
  top: 0;
  width: 1px;
  height: 22px;
  background: #dcdcdc;
}
.rib-end2 { position: absolute; right: 6px; bottom: 7px; }

/* body */
.main {
  flex: 1;
  display: flex;
  min-height: 0;
}
.rail {
  width: 32px;
  flex: none;
  box-sizing: border-box;
  background: #dcdcdc;
  border-right: 1px solid #a8a8a8;
}
.rail-item {
  display: flex;
  align-items: center;
  justify-content: center;
}
.rail-item.on {
  background: #fff;
  margin-left: 2px;
  margin-right: -1px;
  box-shadow: 0 0 0 1px #bbb;
  position: relative;
}

/* part navigator */
.nav {
  width: 326px;
  flex: none;
  box-sizing: border-box;
  border-right: 1px solid #9c9c9c;
  padding: 0 9px 0 7px;
  display: flex;
  flex-direction: column;
}
.nav-head {
  height: 29px;
  display: flex;
  align-items: center;
  justify-content: space-between;
  font-size: 12px;
  color: #333;
  padding: 0 6px 0 3px;
  flex: none;
}
.maxbox {
  width: 11px;
  height: 9px;
  border: 1px solid #222;
  border-top-width: 2px;
  box-sizing: content-box;
}
.tree {
  border: 1px solid #d6d6d6;
  border-bottom: 0;
  font: 11.500px "DejaVu Sans", "Noto Sans CJK SC", sans-serif;
  color: #444;
  flex: none;
}
.tree-head {
  height: 21px;
  background: #f0f0f0;
  border-bottom: 1px solid #d8d8d8;
  display: flex;
  box-sizing: border-box;
  font-family: "Noto Sans CJK SC", sans-serif;
  font-size: 12px;
}
.tree-head .c-name { padding-left: 7px; gap: 18px; }
.tree-head .c-new { padding-left: 7px; }
.sort {
  width: 0;
  height: 0;
  border: 4.500px solid transparent;
  border-bottom: 5px solid #111;
  border-top: 0;
}
.row {
  height: 20px;
  display: flex;
  box-sizing: border-box;
  background: #fff;
  border-bottom: 1px solid #f2f2f2;
}
.row.alt { background: #fafafa; }
.c-name {
  width: 200px;
  box-sizing: border-box;
  border-right: 1px solid #e4e4e4;
  display: flex;
  align-items: center;
  position: relative;
  flex: none;
  white-space: nowrap;
}
.c-new {
  width: 100px;
  box-sizing: border-box;
  border-right: 1px solid #e4e4e4;
  display: flex;
  align-items: center;
  padding-left: 5px;
  flex: none;
}
.tk { width: 14px; height: 14px; flex: none; margin-right: 1px; }
.ti { width: 16px; height: 16px; flex: none; margin-right: 4px; }
.rt.grey { color: #aaa; }
.rt.bold { font-weight: bold; color: #222; letter-spacing: -0.3px; }
.vl {
  position: absolute;
  top: -1px;
  bottom: -1px;
  border-left: 1px dotted #999;
}
.vl.half { bottom: 9px; }
.vl.topoff { top: 9px; }
.hl {
  position: absolute;
  top: 9px;
  border-top: 1px dotted #999;
}
.expander {
  position: absolute;
  top: 5px;
  width: 9px;
  height: 9px;
  box-sizing: border-box;
  border: 1px solid #b0b0b0;
  background: #fff;
}
.expander::before {
  content: "";
  position: absolute;
  left: 1px;
  right: 1px;
  top: 3px;
  height: 1px;
  background: #111;
}
.expander.plus::after {
  content: "";
  position: absolute;
  top: 1px;
  bottom: 1px;
  left: 3px;
  width: 1px;
  background: #111;
}
.hscroll {
  height: 15px;
  background: #f0f0f0;
  display: flex;
  align-items: center;
}
.arr { width: 8px; height: 10px; margin: 0 5px; flex: none; }
.arr.r { margin-left: auto; margin-right: 3px; }
.thumb { width: 208px; height: 15px; background: #c8c8c8; margin-left: 0; }
.nav-bar {
  height: 6px;
  margin-top: 2px;
  box-sizing: border-box;
  background: #d4d4d4;
  border: 1px solid #a4a4a4;
  flex: none;
}

/* graphics windows */
.pane { display: flex; flex-direction: column; min-width: 0; }
.pane.first { width: 777px; flex: none; }
.pane.second { flex: 1; }
.split { width: 6px; background: #f6f6f6; flex: none; }
.doc-tabs { height: 23px; display: flex; flex: none; background: #fff; }
.doc-tab {
  height: 22px;
  display: flex;
  align-items: center;
  background: #dcdcdc;
  color: #222;
  font: 12px "Noto Sans", sans-serif;
  padding: 0 9px 0 6px;
  white-space: nowrap;
}
.doc-tab > svg.i14 { margin-right: 6px; }
.doc-tab.active { background: #5a9dbc; color: #eef6fa; }
.restore {
  width: 7px;
  height: 8px;
  border: 1px solid #222;
  margin: 0 8px 0 10px;
  box-shadow: 2px -2px 0 -1px #dcdcdc, 2px -2px 0 0 #222;
}
.restore.light {
  border-color: #fff;
  box-shadow: 2px -2px 0 -1px #5a9dbc, 2px -2px 0 0 #fff;
}
.xx { width: 9px; height: 9px; }
.viewport {
  flex: 1;
  position: relative;
  background: linear-gradient(#bcbec0, #e8e9eb);
  overflow: hidden;
}
.scene { position: absolute; inset: 0; width: 100%; height: 100%; }
.ax { font: 13px "Liberation Sans", sans-serif; }
.ghost { font: 11px "DejaVu Sans", sans-serif; letter-spacing: 0.7px; }
.dimtxt { font: 12px "Liberation Sans", sans-serif; fill: #2a3ac0; }
.popup {
  position: absolute;
  background: #f0f0f0;
  box-sizing: border-box;
  padding: 4px 12px 4px 4px;
}
.p1 { left: 429px; top: 353px; width: 177px; height: 97px; padding-right: 12px; }
.p2 { left: 607px; top: 439px; width: 163px; height: 46px; }
.pop-body {
  background: #c9c9c9;
  height: 100%;
  font: 12.500px/17px "Open Sans", "Noto Sans CJK SC", sans-serif;
  color: #4a6cb8;
  white-space: nowrap;
  padding-top: 3px;
  box-sizing: border-box;
}
.pop-x { position: absolute; right: 4px; top: 4px; width: 6px; height: 6px; }

/* status + taskbar */
.status {
  height: 22px;
  box-sizing: border-box;
  border-top: 1px solid #a8a8a8;
  display: flex;
  align-items: center;
  justify-content: space-between;
  padding: 0 55px 1px 3px;
  color: #222;
  font-size: 11px;
  font-weight: 500;
  flex: none;
}
.status-icons { display: flex; gap: 4px; }
.taskbar {
  height: 40px;
  background: #202020;
  display: flex;
  align-items: stretch;
  flex: none;
  color: #fff;
}
.start { width: 48px; display: flex; align-items: center; justify-content: center; }
.task-search {
  width: 343px;
  background: #f2f2f2;
  display: flex;
  align-items: center;
  padding-left: 11px;
  gap: 11px;
  box-sizing: border-box;
  color: #444;
  font-size: 14px;
  border-top: 1px solid #cfcfcf;
}
.task-item {
  display: flex;
  align-items: center;
  justify-content: center;
  box-sizing: border-box;
  flex: none;
}
.task-item.ul { border-bottom: 2px solid #6fa8d8; }
.task-item.active { background: #3d3d3d; }
.tray {
  margin-left: auto;
  display: flex;
  align-items: center;
  position: relative;
  width: 240px;
  flex: none;
}
.tray > * { flex: none; }
.chev { width: 12px; height: 8px; margin-left: 2px; }
.tray .i18 { margin-left: 9px; }
.net { width: 18px; height: 16px; margin-left: 6px; }
.tray .i16 { margin-left: 6px; }
.ime { font-size: 14px; margin-left: 8px; }
.clock {
  width: 72px;
  margin-left: 9px;
  display: flex;
  flex-direction: column;
  align-items: center;
  font-size: 12px;
  line-height: 18px;
}
.notif { width: 18px; height: 16px; margin-left: 9px; }
.watermark {
  position: absolute;
  left: 1637px;
  top: 985px;
  display: flex;
  gap: 10px;
  pointer-events: none;
}
.wm-hex { width: 72px; height: 82px; flex: none; }
.wm-text { display: flex; flex-direction: column; padding-top: 11px; }
.wm-big {
  font: bold 42px/44px "Liberation Sans", "Noto Sans CJK SC", sans-serif;
  color: rgba(255, 255, 255, 0.72);
  white-space: nowrap;
  letter-spacing: 1px;
}
.wm-small {
  margin-top: -2px;
  font: bold 16px/20px "Liberation Sans", sans-serif;
  letter-spacing: 2.2px;
  color: rgba(140, 140, 140, 0.6);
  white-space: nowrap;
}
</style>

<style>
html, body {
  margin: 0;
  overflow: hidden;
}
</style>
